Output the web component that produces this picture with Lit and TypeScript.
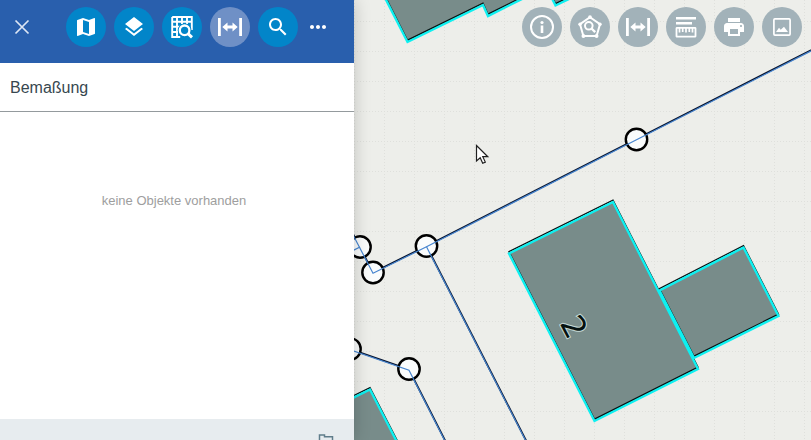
import { LitElement, html, css, svg } from "lit";
import { customElement, property } from "lit/decorators.js";

const measure = svg`
  <path d="M0 3h2.800v18H0zM21.200 3H24v18h-2.800z"/>
  <path d="M4.300 12l5.200-4.500v3h5v-3l5.200 4.500-5.200 4.500v-3h-5v3z"/>`;

const icons: Record<string, unknown> = {
  close: svg`<path d="M5.500 5.500l13 13M18.500 5.500l-13 13" fill="none" stroke="currentColor" stroke-width="1.700"/>`,
  map: svg`<path d="M20.5 3l-.16.03L15 5.1 9 3 3.36 4.9c-.21.07-.36.25-.36.48V20.5c0 .28.22.5.5.5l.16-.03L9 18.9l6 2.1 5.64-1.9c.21-.07.36-.25.36-.48V3.5c0-.28-.22-.5-.5-.5zM15 19l-6-2.11V5l6 2.11V19z"/>`,
  layers: svg`<path d="M11.99 18.54l-7.37-5.73L3 14.07l9 7 9-7-1.63-1.27-7.38 5.74zM12 16l7.36-5.73L21 9l-9-7-9 7 1.63 1.27L12 16z"/>`,
  gridSearch: svg`
    <path d="M2.200 2h19.600v13M2.200 2v20h8M2 6.800h20M2 11.800h8M2 17h6M7 2v20M12 2v7M17 2v7" fill="none" stroke="currentColor" stroke-width="1.900"/>
    <circle cx="14.600" cy="15.300" r="6.800" fill="#0285c9"/>
    <circle cx="14.600" cy="15.300" r="4.800" fill="none" stroke="currentColor" stroke-width="2.300"/>
    <path d="M18 18.700l4 3.600" stroke="currentColor" stroke-width="3"/>`,
  measure,
  search: svg`<path d="M15.5 14h-.79l-.28-.27C15.41 12.59 16 11.11 16 9.5 16 5.91 13.09 3 9.5 3S3 5.91 3 9.5 5.91 16 9.5 16c1.61 0 3.09-.59 4.23-1.57l.27.28v.79l5 4.99L20.49 19l-4.99-5zm-6 0C7.01 14 5 11.99 5 9.5S7.01 5 9.5 5 14 7.01 14 9.5 11.99 14 9.5 14z"/>`,
  more: svg`<path d="M6 10c-1.1 0-2 .9-2 2s.9 2 2 2 2-.9 2-2-.9-2-2-2zm12 0c-1.1 0-2 .9-2 2s.9 2 2 2 2-.9 2-2-.9-2-2-2zm-6 0c-1.1 0-2 .9-2 2s.9 2 2 2 2-.9 2-2-.9-2-2-2z"/>`,
  info: svg`
    <circle cx="12" cy="12" r="11" fill="none" stroke="currentColor" stroke-width="2"/>
    <circle cx="12" cy="7.500" r="1.600"/><path d="M10.700 10.500h2.600V18h-2.600z"/>`,
  areaSearch: svg`
    <path d="M12 2.200L22 9.200 18.600 21H5.400L2 9.200z" fill="none" stroke="currentColor" stroke-width="2"/>
    <circle cx="12" cy="2.200" r="1.900"/><circle cx="22" cy="9.200" r="1.700"/><circle cx="18.600" cy="21" r="1.900"/>
    <circle cx="5.400" cy="21" r="1.900"/><circle cx="2" cy="9.200" r="1.700"/>
    <circle cx="10.800" cy="10.800" r="3.800" fill="none" stroke="currentColor" stroke-width="2"/>
    <path d="M13.500 13.500l3.700 3.700" stroke="currentColor" stroke-width="2.400"/>`,
  legend: svg`
    <path d="M2 2h20v2.500H2zM2 7h16v2.500H2z"/>
    <path d="M3 12.800h18a.5.5 0 0 1 .5.5v7.900a.5.5 0 0 1-.5.5H3a.5.5 0 0 1-.5-.5v-7.900a.5.5 0 0 1 .5-.5z" fill="none" stroke="currentColor" stroke-width="1.800"/>
    <path d="M5.500 13v4.500M8.700 13v4M12 13v4.500M15.300 13v4M18.500 13v4.500" stroke="currentColor" stroke-width="1.700"/>`,
  print: svg`<path d="M19 8H5c-1.660 0-3 1.340-3 3v6h4v4h12v-4h4v-6c0-1.660-1.340-3-3-3zm-3 11H8v-5h8v5zm3-7c-.55 0-1-.45-1-1s.45-1 1-1 1 .45 1 1-.45 1-1 1zm-1-9H6v4h12V3z"/>`,
  image: svg`
    <rect x="3.900" y="3.900" width="16.200" height="16.200" rx="1" fill="none" stroke="currentColor" stroke-width="1.700"/>
    <path d="M6 17l3-4.200 1.700 2L14 11.800l4 5.200z"/>`,
  folder: svg`<path d="M5.500 6h5v1.700h8v12h-13z" fill="none" stroke="currentColor" stroke-width="1.500"/>`,
};

@customElement("icon-button")
class IconButton extends LitElement {
  @property() icon = "";
  @property() label = "";
  @property({ reflect: true }) tone = "plain";

  static styles = css`
    :host { display: block; flex: none; }
    .button {
      display: grid;
      place-items: center;
      width: 40px;
      height: 40px;
      padding: 0;
      border: 0;
      border-radius: 50%;
      background: transparent;
      color: #fff;
      cursor: pointer;
    }
    :host([tone="primary"]) .button { background: #0285c9; }
    :host([tone="active"]) .button { background: #6f90c6; }
    :host([tone="map"]) .button { background: #a2b2b9; }
    :host([tone="dark"]) .button { color: #607d8b; }
    :host([tone="soft"]) .button { color: #dde6f4; }
    .icon { display: block; width: 24px; height: 24px; fill: currentColor; }
  `;

  render() {
    return html`<button class="button" type="button" aria-label=${this.label} title=${this.label}>
      <svg class="icon" viewBox="0 0 24 24" aria-hidden="true">${icons[this.icon]}</svg>
    </button>`;
  }
}

const buildings = [
  "509,253.500 613,202 698,369 594.500,421",
  "659.500,290.500 743.500,247.500 778.500,316 694,358",
  "380,-12 407.500,42 483,5 488,16 560,-20",
  "545,-16 555.500,5.500 600,-16",
  "330,409 370,389.500 430,506 330,506",
];
const lines = [
  "830,40.500 636.500,139 426.500,246 373,272.500 340,209",
  "426.500,246 535,458",
  "320,338 350,349 409,369.500 455,460",
];
const nodes = [[636.5, 139.5], [426.5, 246], [360, 247], [373, 272.5], [350, 349], [409, 369]];

@customElement("map-canvas")
class MapCanvas extends LitElement {
  static styles = css`
    :host { display: block; overflow: hidden; background: #edeeea; }
    .map { display: block; width: 100%; height: 100%; }
    .grid { fill: none; stroke: #dfe0dc; stroke-width: 1; stroke-dasharray: 1 2; }
    .fill { fill: #788c8a; }
    .outline { fill: none; stroke: #081414; stroke-width: 1.4; }
    .edge { fill: none; stroke: #0ef0f0; stroke-width: 2.4; }
    .line-dark { fill: none; stroke: #06122c; stroke-width: 1.8; }
    .line-blue { fill: none; stroke: #4785cf; stroke-width: 1.2; }
    .node { fill: #fafcfc; stroke: #000; stroke-width: 2.4; }
    .number {
      font: 32px "DejaVu Sans", sans-serif;
      text-anchor: middle;
      fill: #061210;
      stroke: #c8dcd8;
      stroke-width: 2;
      paint-order: stroke;
    }
    .pointer { fill: #fff; stroke: #202020; stroke-width: 1.2; }
  `;

  render() {
    return html`<svg class="map" viewBox="354 0 457 440" preserveAspectRatio="xMinYMin slice" role="img" aria-label="Lageplan">
      <defs><pattern id="grid" width="30" height="30" x="384" y="21" patternUnits="userSpaceOnUse">
        <path class="grid" d="M0 .5H30M.5 0V30"/>
      </pattern></defs>
      <rect x="354" width="457" height="440" fill="url(#grid)"/>
      ${buildings.map((p) => svg`<polygon class="fill" points=${p}/>`)}
      ${buildings.map((p) => svg`<polygon class="outline" points=${p} transform="translate(0 -1.8)"/>`)}
      ${buildings.map((p) => svg`<polygon class="edge" points=${p}/>`)}
      ${lines.map((p) => svg`<polyline class="line-dark" points=${p}/>`)}
      ${nodes.map(([x, y]) => svg`<circle class="node" cx=${x} cy=${y} r="10.700"/>`)}
      ${lines.map((p) => svg`<polyline class="line-blue" points=${p} transform="translate(0 .8)"/>`)}
      <path class="line-blue" d="M350 252l10-5"/>
      <text class="number" transform="translate(564 332) rotate(62)">2</text>
      <path class="pointer" d="M476.500 145.500v15.500l3.700-3.300 2.500 5.600 2.600-1.200-2.500-5.400h5z"/>
    </svg>`;
  }
}

@customElement("app-root")
class AppRoot extends LitElement {
  static styles = css`
    :host {
      display: grid;
      grid-template-columns: 354px minmax(0, 1fr);
      height: 100vh;
      overflow: hidden;
      font-family: "Liberation Sans", Arial, sans-serif;
    }
    .panel {
      z-index: 1;
      display: flex;
      flex-direction: column;
      min-height: 0;
      background: #fff;
      box-shadow: 0 0 16px rgba(0, 0, 0, 0.2);
    }
    .bar { display: flex; height: 56px; padding: 7px 16px 0 2px; background: #295fad; }
    .tools { display: flex; gap: 8px; margin-left: auto; }
    .more { margin-left: -8px; }
    .title {
      margin: 0;
      padding: 2px 10px 0;
      border-bottom: 1px solid #949a9d;
      color: #37474f;
      font-size: 16px;
      font-weight: 400;
      line-height: 46px;
    }
    .empty {
      flex: 1;
      margin: 0;
      padding: 80px 16px 0 10px;
      color: #9e9e9e;
      font-size: 13px;
      line-height: 18px;
      text-align: center;
    }
    .footer {
      display: flex;
      flex: none;
      justify-content: flex-end;
      height: 19px;
      padding: 2px 8px 0;
      overflow: hidden;
      background: #e7ecef;
    }
    .view { display: grid; grid-template: minmax(0, 1fr) / minmax(0, 1fr); min-height: 0; }
    .map, .actions { grid-area: 1 / 1; }
    .actions { z-index: 1; display: flex; gap: 8px; justify-self: end; align-self: start; padding: 7px 9px; }
  `;

  render() {
    return html`
      <section class="panel" aria-labelledby="title">
        <header class="bar">
          <icon-button icon="close" label="Schließen" tone="soft"></icon-button>
          <nav class="tools">
            <icon-button icon="map" label="Karte" tone="primary"></icon-button>
            <icon-button icon="layers" label="Ebenen" tone="primary"></icon-button>
            <icon-button icon="gridSearch" label="Auswahl" tone="primary"></icon-button>
            <icon-button icon="measure" label="Bemaßung" tone="active"></icon-button>
            <icon-button icon="search" label="Suche" tone="primary"></icon-button>
            <icon-button class="more" icon="more" label="Mehr"></icon-button>
          </nav>
        </header>
        <h1 class="title" id="title">Bemaßung</h1>
        <p class="empty">keine Objekte vorhanden</p>
        <footer class="footer">
          <icon-button icon="folder" label="Öffnen" tone="dark"></icon-button>
        </footer>
      </section>
      <main class="view">
        <map-canvas class="map"></map-canvas>
        <nav class="actions">
          <icon-button icon="info" label="Information" tone="map"></icon-button>
          <icon-button icon="areaSearch" label="Flächensuche" tone="map"></icon-button>
          <icon-button icon="measure" label="Messen" tone="map"></icon-button>
          <icon-button icon="legend" label="Legende" tone="map"></icon-button>
          <icon-button icon="print" label="Drucken" tone="map"></icon-button>
          <icon-button icon="image" label="Bild" tone="map"></icon-button>
        </nav>
      </main>`;
  }
}
